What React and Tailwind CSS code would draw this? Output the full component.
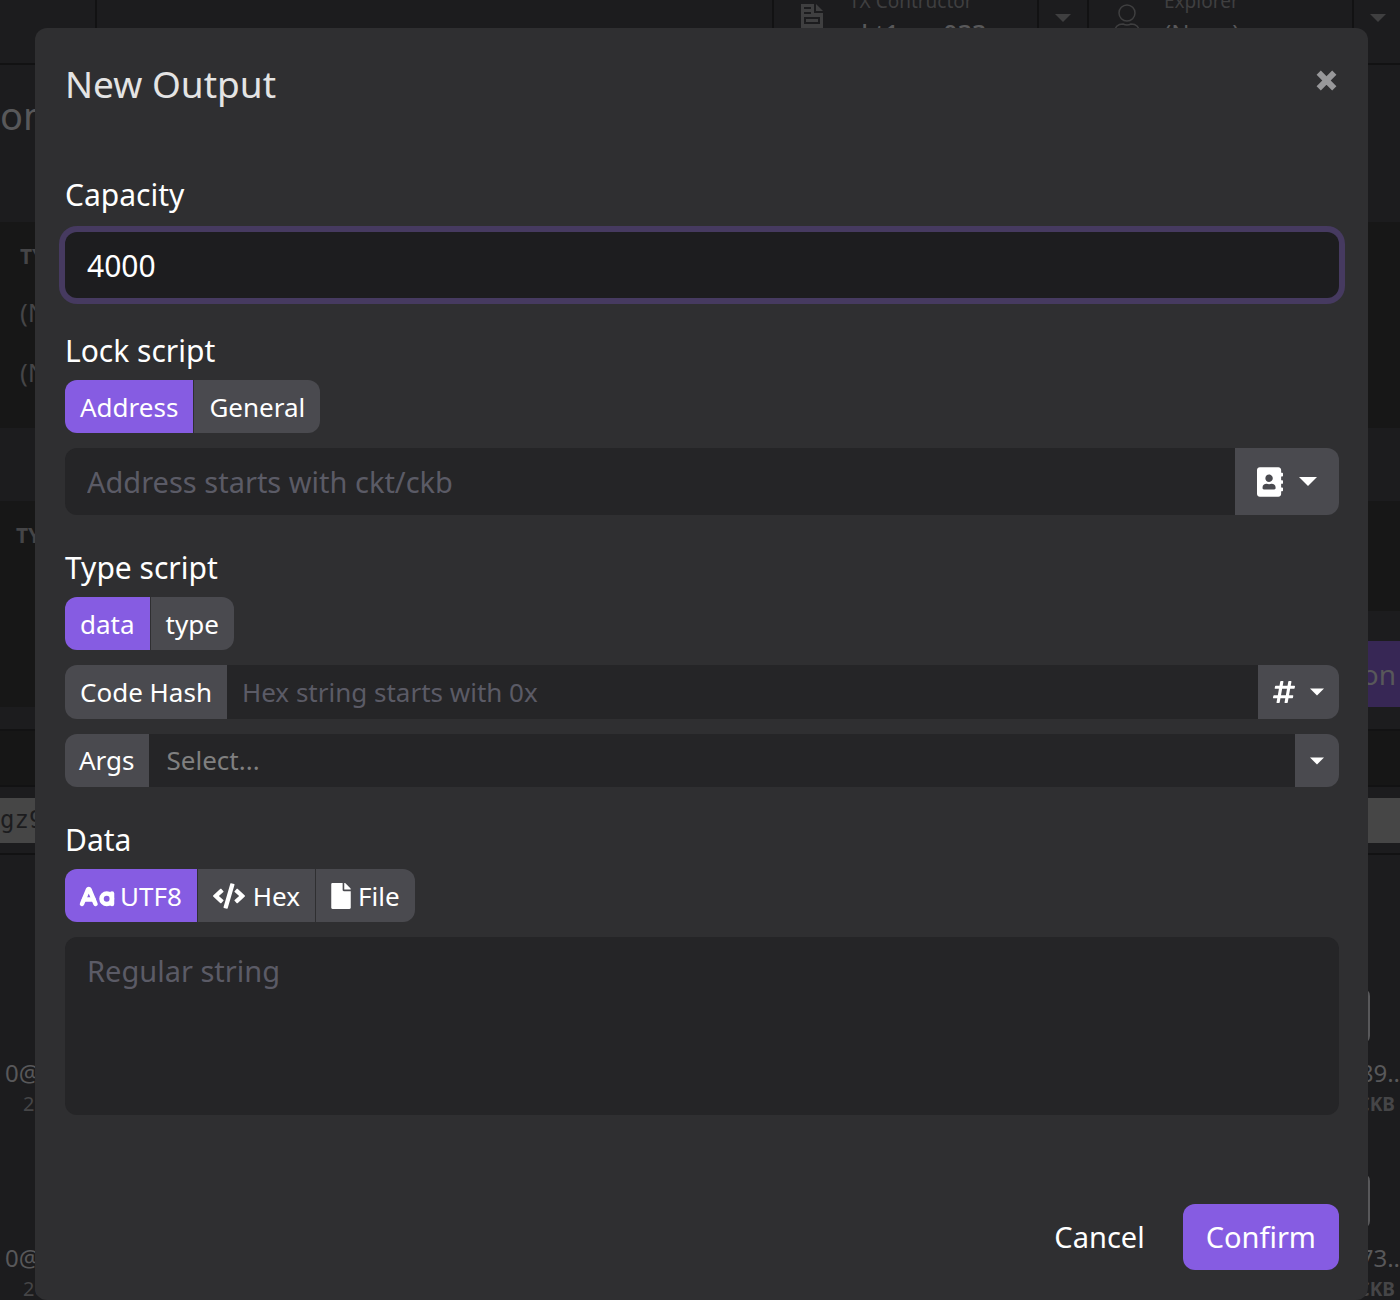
import React, { useState } from "react";
import clsx from "clsx";
import { CaseSensitive } from "lucide-react";
import { FaAddressBook, FaCode, FaFile, FaHashtag } from "react-icons/fa";

function Caret({ className }) {
  return (
    <svg viewBox="0 0 20 10" className={className} aria-hidden="true">
      <path d="M0 0h20L10 10z" fill="currentColor" />
    </svg>
  );
}

function CloseIcon({ className }) {
  return (
    <svg viewBox="0 0 21 21" className={className} aria-hidden="true">
      <path d="M2.7 2.7l15.6 15.6M18.3 2.7L2.7 18.3" stroke="currentColor" strokeWidth="6" />
    </svg>
  );
}

function UserIcon({ className }) {
  return (
    <svg
      viewBox="0 0 30 36"
      className={className}
      fill="none"
      stroke="currentColor"
      strokeWidth="1.5"
      aria-hidden="true"
    >
      <ellipse cx="15" cy="8" rx="8" ry="8" transform="translate(0 1)" />
      <path d="M2 34v-5q1-9 9-9 4 2 8 0 8 0 9 9v5" />
    </svg>
  );
}

function DocIcon({ className }) {
  return (
    <svg viewBox="0 0 22 28" className={className} aria-hidden="true">
      <path d="M0 0h13v9h9v19H0z" fill="currentColor" />
      <path d="M15 0l7 7h-7z" fill="currentColor" />
      <path d="M3 4h7M3 9h7" stroke="#1c1c1e" strokeWidth="2" />
      <path d="M4 14h14v5H4z" fill="none" stroke="#1c1c1e" strokeWidth="2" />
    </svg>
  );
}

function HeaderCell({ icon, label, value, className }) {
  return (
    <div
      className={clsx("flex w-[315px] border-l-2 border-[#121213] text-[#3f3f40]", className)}
    >
      <div className="flex w-[75px] shrink-0 justify-center pt-1">{icon}</div>
      <div className="-mt-3 flex-1">
        <div className="text-[19px] leading-[26px]">{label}</div>
        <div className="text-2xl leading-[38px] text-[#58585a]">{value}</div>
      </div>
      <div className="flex w-[50px] shrink-0 justify-center border-l-2 border-[#121213] pt-[14px]">
        <Caret className="h-2 w-[18px]" />
      </div>
    </div>
  );
}

function CellRow({ hash, top }) {
  return (
    <div className={clsx("flex justify-between", top)}>
      <div className="w-10 overflow-hidden pt-[69px] pl-[5px] whitespace-nowrap">
        <div className="text-2xl leading-[32px] text-[#58585a]">0@0x</div>
        <div className="pl-[18px] text-xl leading-[30px] text-[#454547]">200</div>
      </div>
      <div className="w-[60px]">
        <div className="h-[56px] w-[30px] rounded-lg border-2 border-[#58585a]" />
        <div className="flex flex-col items-end pt-[13px]">
          <div className="text-2xl leading-[32px] text-[#58585a]">{hash}</div>
          <div className="pr-[5px] text-[19px] leading-[30px] font-bold text-[#454547]">CKB</div>
        </div>
      </div>
    </div>
  );
}

// Dimmed page that sits behind the dialog
function Backdrop() {
  return (
    <div className="absolute inset-0 overflow-hidden bg-[#1c1c1e]" aria-hidden="true">
      <div className="flex h-[65px] justify-between border-b-2 border-[#121213]">
        <div className="w-[97px] border-r-2 border-[#121213]" />
        <div className="flex">
          <HeaderCell
            icon={<DocIcon className="h-7 w-[22px]" />}
            label="TX Contructor"
            value={<span className="text-[25px] font-medium">ckt1qyq033</span>}
          />
          <HeaderCell
            className="-mr-0.5"
            icon={<UserIcon className="h-9 w-[30px]" />}
            label="Explorer"
            value="(None)"
          />
        </div>
      </div>
      <div className="h-[157px] pt-6 text-[38px] leading-[52px] text-[#58585a]">on</div>
      <div className="h-[206px] bg-[#171717] pt-5 pl-5 text-[#454547]">
        <div className="w-6 overflow-hidden">
          <div className="text-[21px] leading-[28px] font-bold">TYPE</div>
          <div className="pt-3 text-[26px] leading-[60px]">
            <div>(None)</div>
            <div>(None)</div>
          </div>
        </div>
      </div>
      <div className="h-[73px]" />
      <div className="flex h-[206px] justify-between bg-[#171717]">
        <div className="w-10 overflow-hidden pt-5 pl-4 text-[21px] leading-[28px] font-bold text-[#454547]">
          TYPE
        </div>
        <div className="mt-[110px] w-[80px] bg-[#1c1c1e] pt-[30px]">
          <div className="h-[66px] bg-[#372755] pr-1 text-right text-[28px] leading-[66px] text-[#58585a]">
            on
          </div>
        </div>
      </div>
      <div className="h-6 border-b-2 border-[#121213]" />
      <div className="h-14 border-b-2 border-[#121213] bg-[#161616]" />
      <div className="h-[68px] border-b-2 border-[#121213] pt-[11px]">
        <div className="h-[45px] bg-[#464646] font-['DejaVu_Sans_Mono',monospace] text-2xl leading-[45px] text-[#1c1c1e]">
          gz9
        </div>
      </div>
      <CellRow hash="89.." top="pt-[133px]" />
      <CellRow hash="73.." top="pt-[54px]" />
    </div>
  );
}

function ButtonGroup({ label, options, value, onChange }) {
  return (
    <div className="flex gap-px" role="group" aria-label={label}>
      {options.map((option) => (
        <button
          key={option.name}
          type="button"
          aria-pressed={value === option.name}
          onClick={() => onChange(option.name)}
          className={clsx(
            "flex h-[53px] items-center px-[15px] pt-px text-[26px] first:rounded-l-xl last:rounded-r-xl",
            value === option.name ? "bg-[#865ce2]" : "bg-[#4a4a4f]"
          )}
        >
          {option.icon}
          {option.name}
        </button>
      ))}
    </div>
  );
}

export default function App() {
  const [capacity, setCapacity] = useState("4000");
  const [lockMode, setLockMode] = useState("Address");
  const [hashType, setHashType] = useState("data");
  const [dataType, setDataType] = useState("UTF8");

  return (
    <div className="relative min-h-screen overflow-hidden bg-[#1c1c1e] px-8 pt-7 font-['Noto_Sans',sans-serif] text-white">
      <Backdrop />
      <form
        role="dialog"
        aria-labelledby="dialog-title"
        onSubmit={(e) => e.preventDefault()}
        className="relative ml-[3px] rounded-xl bg-[#2f2f31] pr-[29px] pb-[30px] pl-[30px]"
      >
        <div className="flex items-start justify-between pt-[30px]">
          <h1 id="dialog-title" className="text-[37px] leading-[52px] text-[#e4e4e4]">
            New Output
          </h1>
          <button type="button" aria-label="Close" className="pt-3 pr-[2px] text-[#98989a]">
            <CloseIcon className="size-[21px]" />
          </button>
        </div>

        <label htmlFor="capacity" className="mt-[64px] block text-[30px] leading-[42px]">
          Capacity
        </label>
        <input
          id="capacity"
          type="text"
          value={capacity}
          onChange={(e) => setCapacity(e.target.value)}
          className="mt-4 block h-[66px] w-full rounded-xl bg-[#1d1d1f] px-[22px] text-[30px] ring-6 ring-[#463a60] outline-none"
        />

        <h2 className="mt-8 text-[30px] leading-[42px]">Lock script</h2>
        <div className="mt-2 flex flex-col gap-[15px]">
          <ButtonGroup
            label="Lock script"
            options={[{ name: "Address" }, { name: "General" }]}
            value={lockMode}
            onChange={setLockMode}
          />
          <div className="flex h-[67px] overflow-hidden rounded-xl">
            <input
              type="text"
              aria-label="Lock script address"
              placeholder="Address starts with ckt/ckb"
              className="min-w-0 flex-1 bg-[#252527] px-[22px] text-[29px] outline-none placeholder:text-[#5b5b66]"
            />
            <button
              type="button"
              aria-label="Address book"
              className="flex items-center gap-4 bg-[#4a4a4f] px-[22px]"
            >
              <FaAddressBook className="h-[30px] w-[26px]" />
              <Caret className="h-[9px] w-[18px]" />
            </button>
          </div>
        </div>

        <h2 className="mt-8 text-[30px] leading-[42px]">Type script</h2>
        <div className="mt-2 flex flex-col gap-[15px]">
          <ButtonGroup
            label="Hash type"
            options={[{ name: "data" }, { name: "type" }]}
            value={hashType}
            onChange={setHashType}
          />
          <div className="flex h-[54px] overflow-hidden rounded-xl text-[26px]">
            <label htmlFor="code-hash" className="flex items-center bg-[#4a4a4f] px-[15px]">
              Code Hash
            </label>
            <input
              id="code-hash"
              type="text"
              placeholder="Hex string starts with 0x"
              className="min-w-0 flex-1 bg-[#252527] px-[15px] outline-none placeholder:text-[#5b5b66]"
            />
            <button
              type="button"
              aria-label="Known code hashes"
              className="flex items-center gap-[15px] bg-[#4a4a4f] px-[15px]"
            >
              <FaHashtag className="h-[26px] w-[22px]" />
              <Caret className="h-2 w-[14px]" />
            </button>
          </div>
          <div className="flex h-[53px] overflow-hidden rounded-xl text-[26px]">
            <label htmlFor="args" className="flex items-center bg-[#4a4a4f] px-[14px]">
              Args
            </label>
            <input
              id="args"
              type="text"
              placeholder="Select..."
              className="min-w-0 flex-1 bg-[#252527] px-[18px] outline-none placeholder:text-[#808080]"
            />
            <button
              type="button"
              aria-label="Show args"
              className="flex items-center bg-[#4a4a4f] px-[15px]"
            >
              <Caret className="h-2 w-[14px]" />
            </button>
          </div>
        </div>

        <h2 className="mt-8 text-[30px] leading-[42px]">Data</h2>
        <div className="mt-2 flex flex-col gap-[15px]">
          <ButtonGroup
            label="Data format"
            options={[
              {
                name: "UTF8",
                icon: <CaseSensitive className="mt-1 mr-[5px] -ml-px size-9" strokeWidth={3} />,
              },
              { name: "Hex", icon: <FaCode className="mr-2 h-[26px] w-8" /> },
              { name: "File", icon: <FaFile className="mr-[7px] h-[26px] w-5" /> },
            ]}
            value={dataType}
            onChange={setDataType}
          />
          <textarea
            aria-label="Data"
            placeholder="Regular string"
            className="block h-[178px] w-full resize-none rounded-xl bg-[#252527] px-[22px] py-[13px] text-[29px] leading-[42px] outline-none placeholder:text-[#5b5b66]"
          />
        </div>

        <div className="mt-[89px] flex justify-end gap-4 text-[29px]">
          <button type="button" className="h-[66px] px-[22px]">
            Cancel
          </button>
          <button type="submit" className="h-[66px] rounded-xl bg-[#865ce2] px-[23px]">
            Confirm
          </button>
        </div>
      </form>
    </div>
  );
}
